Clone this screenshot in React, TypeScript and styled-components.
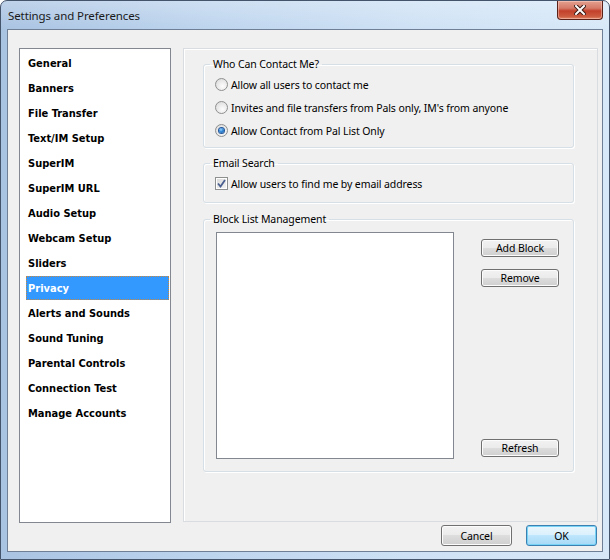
import React from "react";
import styled, { createGlobalStyle } from "styled-components";

const GlobalStyle = createGlobalStyle`
  html, body {
    margin: 0;
    padding: 0;
    width: 610px;
    height: 560px;
    overflow: hidden;
  }
  body {
    font-family: "Noto Sans", "Liberation Sans", sans-serif;
    color: #000;
  }
`;

const Window = styled.div`
  width: 610px;
  height: 560px;
  box-sizing: border-box;
  display: flex;
  flex-direction: column;
  padding: 0 6px 7px 6px;
  border: 1px solid #44546a;
  border-radius: 7px 7px 0 0;
  background:
    linear-gradient(180deg, rgba(255, 255, 255, 0.25) 0, rgba(255, 255, 255, 0) 28px),
    linear-gradient(90deg, #a9c3e2 0%, #bed5ee 35%, #cfe2f5 70%, #d7e8f8 100%);
`;

const TitleBar = styled.div`
  height: 28px;
  display: flex;
  align-items: flex-start;
  justify-content: space-between;
`;

const Title = styled.div`
  font-size: 11.5px;
  line-height: 16px;
  padding: 7px 0 0 1px;
  letter-spacing: -0.1px;
  color: #1a1a1a;
`;

const CloseButton = styled.div`
  width: 46px;
  height: 19px;
  box-sizing: border-box;
  display: flex;
  align-items: center;
  justify-content: center;
  border: 1px solid #5a2118;
  border-top: none;
  border-radius: 0 0 4px 4px;
  background: linear-gradient(180deg, #e4a08f 0%, #d57a68 40%, #c2402a 55%, #cc5a3e 85%, #e3886b 100%);
  box-shadow: inset 0 0 0 1px rgba(255, 220, 210, 0.45);
`;

const Client = styled.div`
  flex: 1;
  display: flex;
  flex-direction: column;
  border: 1px solid #6f8096;
  background: #f0f0f0;
  padding: 18px 4px 5px 11px;
  min-height: 0;
`;

const Body = styled.div`
  flex: 1;
  display: flex;
  gap: 12px;
  min-height: 0;
`;

const NavList = styled.ul`
  list-style: none;
  margin: 0;
  width: 152px;
  box-sizing: border-box;
  border: 1px solid #828790;
  background: #fff;
  padding: 2px 1px 0 6px;
`;

const NavItem = styled.li<{ $active?: boolean }>`
  height: 24px;
  margin-bottom: 1px;
  box-sizing: border-box;
  display: flex;
  align-items: center;
  padding: 0 0 0 1px;
  font-family: "DejaVu Sans Condensed", "DejaVu Sans", sans-serif;
  font-weight: bold;
  font-size: 11px;
  color: ${(p) => (p.$active ? "#fff" : "#000")};
  background: ${(p) => (p.$active ? "#3399ff" : "transparent")};
  border: 1px dotted ${(p) => (p.$active ? "#c8873f" : "transparent")};
`;

const Panel = styled.div`
  flex: 1;
  margin-bottom: 1px;
  border: 1px solid #d9dce1;
  box-shadow: inset 1px 1px 0 #fff;
  padding: 7px 23px 0 19px;
  display: flex;
  flex-direction: column;
`;

const Group = styled.fieldset<{ $gap?: number; $bottom?: number }>`
  margin: ${(p) => p.$gap ?? 0}px 0 0 0;
  min-width: 0;
  border: 1px solid #d5dfe5;
  border-radius: 3px;
  box-shadow: inset 1px 1px 0 #fff, 1px 1px 0 #fff;
  padding: 1px 14px ${(p) => p.$bottom ?? 5}px 5px;
`;

const Legend = styled.legend`
  margin-left: 1px;
  padding: 0 3px;
  font-size: 10.5px;
  letter-spacing: -0.1px;
  line-height: 16px;
`;

const OptionRow = styled.label`
  height: 23px;
  display: flex;
  align-items: center;
  gap: 3px;
  padding-left: 6px;
  font-size: 10.5px;
  letter-spacing: -0.1px;
`;

const Radio = styled.span<{ $checked?: boolean }>`
  width: 13px;
  height: 13px;
  box-sizing: border-box;
  border-radius: 50%;
  border: 1px solid #8e8f8f;
  background: radial-gradient(circle at 60% 65%, #fdfdfd 0%, #e6e6e6 60%, #d2d2d2 100%);
  display: flex;
  align-items: center;
  justify-content: center;
  &::after {
    content: "";
    width: 5px;
    height: 5px;
    border-radius: 50%;
    display: ${(p) => (p.$checked ? "block" : "none")};
    background: radial-gradient(circle at 40% 35%, #9ad4ff 0%, #2f86d6 45%, #104f96 100%);
    box-shadow: 0 0 0 1px #25569a;
  }
`;

const CheckBox = styled.span`
  width: 13px;
  height: 13px;
  box-sizing: border-box;
  border: 1px solid #8e8f8f;
  background: #fff;
  padding: 1px;
  display: flex;
`;

const CheckInner = styled.span`
  flex: 1;
  display: flex;
  align-items: center;
  justify-content: center;
  background: linear-gradient(135deg, #dcdcdc 0%, #f2f2f2 100%);
`;

const BlockRow = styled.div`
  display: flex;
  padding: 4px 0 7px 7px;
`;

const ListBox = styled.div`
  width: 238px;
  height: 227px;
  box-sizing: border-box;
  border: 1px solid #828790;
  background: #fff;
`;

const ButtonColumn = styled.div`
  margin-left: auto;
  display: flex;
  flex-direction: column;
  gap: 12px;
  padding: 7px 0 2px 0;
`;

const Button = styled.button<{ $w: number; $h: number; $default?: boolean; $push?: boolean }>`
  width: ${(p) => p.$w}px;
  height: ${(p) => p.$h}px;
  margin-top: ${(p) => (p.$push ? "auto" : "0")};
  padding: 0;
  font-family: "Noto Sans", "Liberation Sans", sans-serif;
  font-size: 10.5px;
  letter-spacing: -0.1px;
  color: #000;
  border-radius: 3px;
  border: 1px solid ${(p) => (p.$default ? "#3c7fb1" : "#707070")};
  background: ${(p) =>
    p.$default
      ? "linear-gradient(180deg, #eaf6fd 0%, #d9f0fc 50%, #bee6fd 50%, #a7d9f5 100%)"
      : "linear-gradient(180deg, #f2f2f2 0%, #ebebeb 50%, #dddddd 50%, #cfcfcf 100%)"};
  box-shadow: inset 0 0 0 1px ${(p) => (p.$default ? "#78d4f6" : "#fcfcfc")};
`;

const Footer = styled.div`
  height: 21px;
  margin-top: 2px;
  padding-right: 1px;
  display: flex;
  justify-content: flex-end;
  gap: 14px;
`;

const navItems = [
  "General",
  "Banners",
  "File Transfer",
  "Text/IM Setup",
  "SuperIM",
  "SuperIM URL",
  "Audio Setup",
  "Webcam Setup",
  "Sliders",
  "Privacy",
  "Alerts and Sounds",
  "Sound Tuning",
  "Parental Controls",
  "Connection Test",
  "Manage Accounts",
];

const contactOptions = [
  "Allow all users to contact me",
  "Invites and file transfers from Pals only, IM's from anyone",
  "Allow Contact from Pal List Only",
];

export default function App() {
  return (
    <>
      <GlobalStyle />
      <Window>
        <TitleBar>
          <Title>Settings and Preferences</Title>
          <CloseButton>
            <svg width="12" height="10" viewBox="0 0 12 10">
              <path d="M2 1 L10 9 M10 1 L2 9" stroke="#3b1a14" strokeWidth="4" strokeLinecap="square" />
              <path d="M2 1 L10 9 M10 1 L2 9" stroke="#fff" strokeWidth="2" strokeLinecap="square" />
            </svg>
          </CloseButton>
        </TitleBar>
        <Client>
          <Body>
            <NavList>
              {navItems.map((item) => (
                <NavItem key={item} $active={item === "Privacy"}>
                  {item}
                </NavItem>
              ))}
            </NavList>
            <Panel>
              <Group>
                <Legend>Who Can Contact Me?</Legend>
                {contactOptions.map((opt, i) => (
                  <OptionRow key={opt}>
                    <Radio $checked={i === 2} />
                    {opt}
                  </OptionRow>
                ))}
              </Group>
              <Group $gap={7} $bottom={7}>
                <Legend>Email Search</Legend>
                <OptionRow>
                  <CheckBox>
                    <CheckInner>
                      <svg width="9" height="9" viewBox="0 0 9 9">
                        <path d="M1 4.5 L3.5 7.5 L8 1" fill="none" stroke="#4a5f8f" strokeWidth="1.8" />
                      </svg>
                    </CheckInner>
                  </CheckBox>
                  Allow users to find me by email address
                </OptionRow>
              </Group>
              <Group $gap={8}>
                <Legend>Block List Management</Legend>
                <BlockRow>
                  <ListBox />
                  <ButtonColumn>
                    <Button $w={78} $h={18}>Add Block</Button>
                    <Button $w={78} $h={18}>Remove</Button>
                    <Button $w={78} $h={18} $push>Refresh</Button>
                  </ButtonColumn>
                </BlockRow>
              </Group>
            </Panel>
          </Body>
          <Footer>
            <Button $w={71} $h={21}>Cancel</Button>
            <Button $w={71} $h={21} $default>OK</Button>
          </Footer>
        </Client>
      </Window>
    </>
  );
}
